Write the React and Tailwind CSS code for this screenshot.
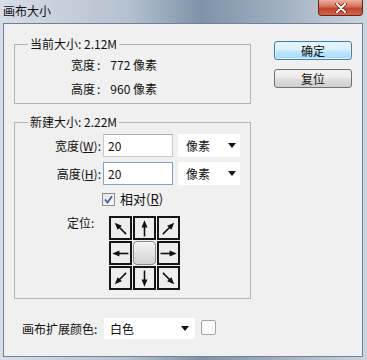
import React from "react";

const Arrow = ({ deg }) => (
  <svg width="17" height="17" viewBox="0 0 16 16">
    <g transform={`rotate(${deg} 8 8)`}>
      <line x1="8" y1="15.5" x2="8" y2="5" stroke="#111" strokeWidth="1.5" />
      <polygon points="8,0.3 5.2,7 10.8,7" fill="#111" />
    </g>
  </svg>
);

const Caret = () => (
  <svg width="8" height="5" viewBox="0 0 8 5">
    <polygon points="0,0 8,0 4,5" fill="#111" />
  </svg>
);

const Cell = ({ deg }) => (
  <div className="w-[23px] h-[24px] border-2 border-[#151515] bg-[#eeeeee] flex items-center justify-center">
    <Arrow deg={deg} />
  </div>
);

export default function App() {
  return (
    <div className="w-[367px] h-[360px] flex flex-col bg-[linear-gradient(90deg,#d6dee7_0%,#b4c1cf_35%,#7e92a9_55%,#9eaebf_75%,#cbd5df_100%)] font-['Noto_Sans_CJK_SC',sans-serif] text-[12px] leading-[16px] text-[#111]">
      {/* title bar */}
      <div className="h-[23px] flex items-start">
        <span className="ml-[3px] mt-[3px] text-[12px] text-[#111]">画布大小</span>
        <div className="ml-auto mr-[4px] w-[45px] h-[16px] rounded-b-[4px] border border-t-0 border-[#6b2418] bg-[linear-gradient(180deg,#eab0a0_0%,#d6705a_45%,#c3412a_55%,#d0654c_100%)] flex items-center justify-center">
          <svg width="12" height="10" viewBox="0 0 12 10">
            <path d="M2 1 L10 9 M10 1 L2 9" stroke="#5a1a10" strokeWidth="3.4" strokeLinecap="round" />
            <path d="M2 1 L10 9 M10 1 L2 9" stroke="#fff" strokeWidth="2" strokeLinecap="round" />
          </svg>
        </div>
      </div>

      {/* client area */}
      <div className="ml-[3px] mr-[4px] mb-[3px] flex-1 border border-[#6f8297] bg-[#f0f0f0] flex">
        <div className="ml-[10px] w-[237px] flex flex-col">
          <fieldset className="mt-[12px] border border-[#b4b4b4]">
            <legend className="ml-[13px] px-[2px]">当前大小: 2.12M</legend>
            <div className="pl-[56px] pt-[5px] pb-[6px] flex flex-col">
              <div>
                宽度<span className="ml-[2px] mr-[10px]">:</span>772 像素
              </div>
              <div className="mt-[8px]">
                高度<span className="ml-[2px] mr-[10px]">:</span>960 像素
              </div>
            </div>
          </fieldset>

          <fieldset className="mt-[10px] border border-[#b4b4b4]">
            <legend className="ml-[13px] px-[2px]">新建大小: 2.22M</legend>
            <div className="pt-[4px] pb-[8px] flex flex-col">
              <div className="flex items-center">
                <span className="w-[86px] text-right">
                  宽度(<span className="underline">W</span>):
                </span>
                <div className="ml-[2px] w-[70px] h-[23px] border border-[#c5cad0] border-t-[#abadb3] bg-white pl-[4px] flex items-center">
                  20
                </div>
                <div className="ml-[5px] w-[62px] h-[23px] bg-white pl-[8px] pr-[4px] flex items-center justify-between">
                  <span>像素</span>
                  <Caret />
                </div>
              </div>
              <div className="mt-[5px] flex items-center">
                <span className="w-[86px] text-right">
                  高度(<span className="underline">H</span>):
                </span>
                <div className="ml-[2px] w-[70px] h-[23px] border border-[#7da2ce] bg-white pl-[4px] flex items-center">
                  20
                </div>
                <div className="ml-[5px] w-[62px] h-[23px] bg-white pl-[8px] pr-[4px] flex items-center justify-between">
                  <span>像素</span>
                  <Caret />
                </div>
              </div>
              <div className="mt-[6px] pl-[87px] flex items-center">
                <div className="w-[13px] h-[13px] border border-[#8e8f8f] bg-[linear-gradient(135deg,#e4e4e4,#fafafa)] flex items-center justify-center">
                  <svg width="9" height="9" viewBox="0 0 9 9">
                    <path d="M1 4.5 L3.5 7.5 L8 1.2" stroke="#3a5aa8" strokeWidth="1.7" fill="none" />
                  </svg>
                </div>
                <span className="ml-[5px] text-[13px]">
                  相对(<span className="underline">R</span>)
                </span>
              </div>
              <div className="mt-[9px] flex items-start">
                <span className="ml-[52px] w-[42px] -mt-[1px]">定位:</span>
                <div className="grid grid-cols-[23px_23px_23px] gap-[1px]">
                  <Cell deg={-45} />
                  <Cell deg={0} />
                  <Cell deg={45} />
                  <Cell deg={-90} />
                  <div className="w-[23px] h-[24px] rounded-[4px] border border-[#8a8a8a] bg-[linear-gradient(180deg,#f4f4f4,#d2d2d2)]" />
                  <Cell deg={90} />
                  <Cell deg={-135} />
                  <Cell deg={180} />
                  <Cell deg={135} />
                </div>
              </div>
            </div>
          </fieldset>

          <div className="mt-[19px] flex items-center">
            <span className="ml-[8px] w-[82px]">画布扩展颜色:</span>
            <div className="w-[91px] h-[21px] bg-white pl-[6px] pr-[6px] flex items-center justify-between">
              <span>白色</span>
              <Caret />
            </div>
            <div className="ml-[6px] w-[15px] h-[15px] -mt-[3px] rounded-[2px] border border-[#a5a5a5] bg-[#fbfbfb]" />
          </div>
        </div>

        <div className="ml-[23px] mt-[17px] w-[78px] flex flex-col">
          <div className="h-[19px] rounded-[3px] border border-[#3c7fb1] bg-[linear-gradient(180deg,#eaf6fd_0%,#d9f0fc_45%,#bee6fd_55%,#a7d9f5_100%)] shadow-[inset_0_0_0_1px_#dff1fb] flex items-center justify-center">
            确定
          </div>
          <div className="mt-[9px] h-[19px] rounded-[3px] border border-[#707070] bg-[linear-gradient(180deg,#f2f2f2_0%,#ebebeb_45%,#dddddd_55%,#cfcfcf_100%)] flex items-center justify-center">
            复位
          </div>
        </div>
      </div>
    </div>
  );
}
